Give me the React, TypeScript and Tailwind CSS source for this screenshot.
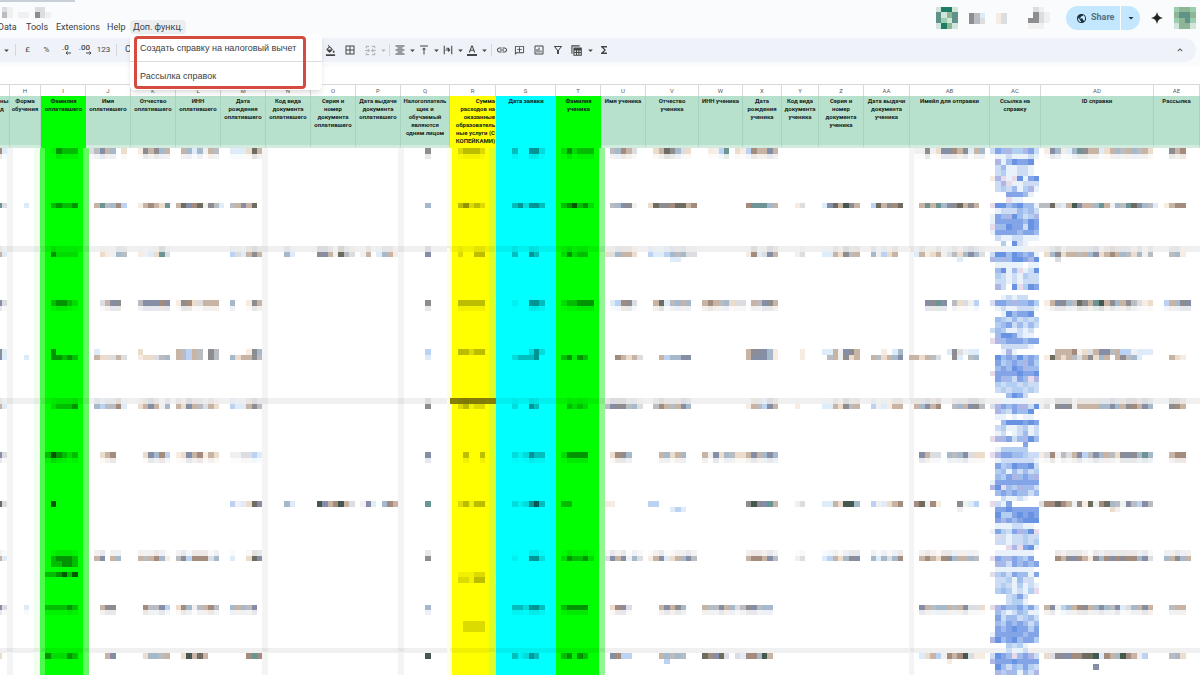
import { Fragment, ReactNode } from "react";
import clsx from "clsx";
import {
  MdArrowDropDown,
  MdBorderAll,
  MdFormatAlignCenter,
  MdFormatColorFill,
  MdFormatColorText,
  MdFunctions,
  MdKeyboardArrowUp,
  MdLink,
  MdOutlineAddComment,
  MdOutlineFilterAlt,
  MdOutlineInsertChart,
  MdPublic,
  MdVerticalAlignTop,
} from "react-icons/md";

type Column = {
  name: string;
  width: number;
  col: string;
  title: string[];
  cell?: string;
  head?: string;
};

const COLUMNS: Column[] = [
  { name: "", width: 10, col: "w-[10px]", title: ["ны", "д"], head: "text-left" },
  { name: "H", width: 31, col: "w-[31px]", title: ["Форма", "обучения"] },
  { name: "I", width: 45, col: "w-[45px]", title: ["Фамилия", "оплатившего"], cell: "bg-[#00ff00]" },
  { name: "J", width: 45, col: "w-[45px]", title: ["Имя", "оплатившего"] },
  { name: "K", width: 45, col: "w-[45px]", title: ["Отчество", "оплатившего"] },
  { name: "L", width: 45, col: "w-[45px]", title: ["ИНН", "оплатившего"] },
  { name: "M", width: 45, col: "w-[45px]", title: ["Дата", "рождения", "оплатившего"] },
  { name: "N", width: 45, col: "w-[45px]", title: ["Код вида", "документа", "оплатившего"] },
  { name: "O", width: 45, col: "w-[45px]", title: ["Серия и", "номер", "документа", "оплатившего"] },
  { name: "P", width: 45, col: "w-[45px]", title: ["Дата выдачи", "документа", "оплатившего"] },
  { name: "Q", width: 49, col: "w-[49px]", title: ["Налогоплатель", "щик и", "обучаемый", "являются", "одним лицом"] },
  {
    name: "R",
    width: 46,
    col: "w-[46px]",
    title: ["Сумма", "расходов на", "оказанные", "образователь", "ные услуги (С", "КОПЕЙКАМИ)"],
    cell: "bg-[#ffff00]",
    head: "pr-px text-right",
  },
  { name: "S", width: 60, col: "w-[60px]", title: ["Дата заявки"], cell: "bg-[#00ffff]" },
  { name: "T", width: 45, col: "w-[45px]", title: ["Фамилия", "ученика"], cell: "bg-[#00ff00]" },
  { name: "U", width: 45, col: "w-[45px]", title: ["Имя ученика"] },
  { name: "V", width: 53, col: "w-[53px]", title: ["Отчество", "ученика"] },
  { name: "W", width: 44, col: "w-[44px]", title: ["ИНН ученика"] },
  { name: "X", width: 39, col: "w-[39px]", title: ["Дата", "рождения", "ученика"] },
  { name: "Y", width: 37, col: "w-[37px]", title: ["Код вида", "документа", "ученика"] },
  { name: "Z", width: 45, col: "w-[45px]", title: ["Серия и", "номер", "документа", "ученика"] },
  { name: "AA", width: 46, col: "w-[46px]", title: ["Дата выдачи", "документа", "ученика"] },
  { name: "AB", width: 80, col: "w-[80px]", title: ["Имейл для отправки"] },
  { name: "AC", width: 51, col: "w-[51px]", title: ["Ссылка на", "справку"] },
  { name: "AD", width: 113, col: "w-[113px]", title: ["ID справки"] },
  { name: "AE", width: 46, col: "w-[46px]", title: ["Рассылка"] },
];

const LEFTS = COLUMNS.map((_, i) =>
  COLUMNS.slice(0, i).reduce((sum, c) => sum + c.width, 0)
);

// mosaic block size and the place of block 0,0 relative to the sheet body
const BLOCK = 5.43;
const ORIGIN_X = 1.8;
const ORIGIN_Y = 0.4;

const PALETTE: Record<string, string> = {
  a: "#f0f0f0",
  b: "#dcdde0",
  c: "#b9bdc1",
  d: "#8d8d91",
  e: "#6e6c60",
  f: "#45584f",
  g: "#ecdccb",
  h: "#c7b4a5",
  i: "#a38b7e",
  j: "#deebf9",
  k: "#bcd2f3",
  l: "#a5b9cb",
  m: "#868ea6",
  n: "#6c9494",
  o: "#f7ece1",
  t: "#d2e5dc",
  v: "#1f7f66",
  w: "#5f938a",
  x: "#8fb594",
  z: "#99cfae",
  A: "#e9f1fb",
  B: "#cddcf5",
  C: "#b2cff2",
  D: "#a0bcec",
  E: "#83a5e8",
  F: "#6893e2",
  G: "#aeb6e6",
  H: "#e6daeb",
  I: "#d8def0",
  "1": "rgba(0,0,0,0.06)",
  "2": "rgba(0,0,0,0.14)",
  "3": "rgba(0,0,0,0.26)",
  "4": "rgba(0,0,0,0.42)",
  "5": "rgba(0,0,0,0.65)",
};

// [line, "block:colours ..."], optionally with the line of its pale echo
type Line = [number, string, number?];

const LINES: Line[] = [
  [0, "-1:ij 9:14333 16:bcmhl.g 25:odhdlh 33:hljlahc 42:jjjgeh 78:d 84:23332 94:3..442 103:242333 112:clihb 120:ghedlbg 130:oakn 135:gokihhmh 168:aadagmmihdjhl 192:omlojlndhhjghlchlchg 215:dhi", 1],
  [10, "-1:nb 4:j 9:34334 17:hnclik 25:ohihgn 32:hemieadcj 42:chmhe 78:l 84:34232 94:342443 103:345342 112:clmda 119:geddieehi 137:innnlh 146:ob 151:jmehfdh 160:kehdie 169:hnhnlmdehdh 191:ccebjhfmhhlnhalcnemlcj 214:ohii"],
  [19, "-1:hj 9:42222 18:goalc 25:oajgnb 42:kbjhdh 52:lj 58:dmhaecb 66:ah.jlho 78:m 84:2..33 94:3..43 103:24233 111:gblhhg 119:kjjklclbb 137:oijbmh 146:ab 151:jjhgdch 160:lakgh 168:jhoghabcglmlb 192:gldghhchlmghihlcglac 215:clo", 18],
  [20, "123:jj 176:j 194:b"],
  [28, "-1:mb 9:34432 18:bhmd 25:cmmmim 32:odigbhhh 42:l..odh 78:d 84:33333 94:1..443 103:233444 112:jkidb 120:hejclhl 129:hihclgbb 138:hcmdh 170:mdnm 175:cgbak 192:ohmdlcedhnfhdlhdcbog 214:khldm", 29],
  [37, "-1:dj 9:4 17:j 25:g 32:hckhc.dc 45:odl 78:k 84:33233 97:242 137:hdmmlo 147:o 151:jjhamdh 162:o.jl 174:jdbajj 194:hhhiagbhmmchkkajjj"],
  [38, "-1:mj 4:j 9:44343 17:hggbhb 25:oggbcl 32:hckhc.dc 42:lghhdc 78:j 94:23334 103:34143 113:ihghb 121:hkllmm 137:hmmmlo 147:o 152:chadgh 160:hcghlm 167:hhghcb 175:dj.cl 192:oehghcbhdglh.hdclj 215:hgo"],
  [47, "-1:hj 9:23334 17:lkccij 25:ghmhal 32:hgmhcbhg 42:kjjhdc 78:d 84:23122 94:2..43 104:3232 111:cmddclb 120:cihchml 137:ohckmh 146:o 151:jjhgdch 160:kajohh 168:hlmhi 175:clhmdc 191:ab.dmdahhhhllmlhdihml 215:dih", 46],
  [56, "-1:mb 8:354323 18:ghi 26:gmlik 32:ogmhiohg 42:aabbkj 78:m 85:3..3 94:212433 103:24444 112:gidl 121:hlghl 129:hamglcgghmhlml 169:mhbb.lclmbgg 191:obiacbhmkcmlhcgdmdlnl 215:hii", 57],
  [65, "-1:eb 9:5 42:kajgem 52:lj 58:fmhifhb 66:amj.lih 78:n 84:23133 94:212453 103:33 111:oo 119:kk 137:dfdmnh 146:ab 151:jjhgffl 160:kajghi 168:ieaio 176:dajk 191:biieihadoeaielcamckmc"],
  [66, "123:jkj 176:a 204:ga"],
  [75, "-1:hj 9:34443 17:hm.hl 25:hchilo 32:cdkiiibl 42:j..gem 78:d 94:1..442 103:243342 111:bmhmalb 119:ohmjghlmc 137:hiihmc 146:ab 151:jkhgldm 160:ljlbli 169:hihgidlhhlc 194:ihdmihodlimidiilmb 214:lhdlh", 74],
  [76, "9:33443"],
  [78, "8:334535 84:11122"],
  [79, "84:22133"],
  [84, "-1:mb 4:j 8:333343 18:hdd 26:iccmk 32:gilachic 42:lhlcm 78:l 94:332443 103:34444 112:gimb 121:hmhdl 129:hccmhlbcdmcll 169:mhcllhchmbbg 192:hmaklhidhlmlcmjblhmh 215:chh", 85],
  [87, "85:2222"],
  [88, "85:2222"],
  [93, "-1:g 8:422243 19:hm 26:gllch 33:gfheh 45:ini 78:f 94:31243 103:34143 112:mikk 121:hlclc 129:eimeb 135:bjiilfh 169:jghkaihifboo 192:gbdmmiieefjihlfihak 215:clg"],
  [94, "122:k 174:o"],
  [95, "201:m"],
];

// the blurred links of column AC, one entry per mosaic line
const LINKS = `BEDGCCGEB .AABAAABA .GADFEEF. .BDAABBA. .BCAABBA. oGHAHFAEF .BGHAABBB
.BCBDACGA ...EEEDA. ...HAA... HFFDEFDDA .ABBBDCDB AEDGFDBCG AEEEEEDFE HDDFEEBFE
AEEEEDEED .BAABBAAA ..C.FIA.. ...AAA... BFFDFEDEA GDGDFFEGF .AAAAA.AA .DFADHABF
.CBABACBB .BBABABBB .GB.FHCFE ......... ..ABABB.. IEEDGDDEC .ABAABBBA ..AFDEEF.
.DCBDBCBC .CDEBDBDB BDCAABAB. .DFFEBAA. HGDEEEDEE ..BBBBBA. ..AGA.... .FDEDFDED
.ECDEDGEC .DEDFEGDD HEEEEFEEF .EGDBEDHG .CBCCBCBB .BCBCCBCB ...DFEB.. ..AAAAA..
IGEDEGGBF .GCBEDDF. .AA.A.AA. ..DFFFEFE .BCAABCAB .AB.ABDAB HGGEBDGFD ......E..
.ACCCCC.. HGEEDDCBB .ABBBBBBA .ECDFEEFB .CDADBDBC .DCEGDEDG AEEEEEEEE GFHDCGDDB
.DEDEDDBD ..BAABA.. HBAE..... .EEFEEEEE .FCCEFEFE .EGEDEFFF .AAABBAA. AECBEGDFH
.IBABBCBB .BBABBCBC ...HGHEFA .AAAAAAA. HEDGEDCE. .GDBEDEDE .AAAAAAA. HCDBEDDAE
.BBCADIB. .BCBACABA .CDCABACH ...BCEB.. ...BCCA.. HGEDDECEB .DBABDCAA .EBDDBCDB
.DCEDEDBD .EDEFEECE AEEEEEDEE GFDEFDEEC ...CBCA.. ...BAAB.. BFEDHDEGB GEEEFEEEE
.FDBDCECB .GCGDADBG`.split(/\s+/);

// soft vertical lines left by the pixelation, by block column
const STRIPES: Record<string, [number, string][]> = {
  "": [[1, "#f4f4f4"]],
  H: [[6, "#f0fdf0"]],
  I: [
    [7, "#4dfb4d"],
    [15, "#62fb62"],
  ],
  M: [[48, "#f4f4f4"]],
  P: [[73, "#f4f4f4"]],
  R: [
    [82, "#ffffe0"],
    [89.8, "#d9ff26"],
  ],
  T: [[110, "#93f593"]],
  AB: [[167, "#f4f4f4"]],
};

const ROW_LINES = [18, 46, 92];

// top edges of the sheet rows, counted from the first mosaic line
const TOPS = [0, 49, 100, 150, 201, 251, 302, 352, 403, 453, 504, 554];

type Block = { x: number; y: number; fill: string; opacity?: number };

const parseRuns = (runs: string, line: number, opacity?: number): Block[] =>
  runs.split(" ").flatMap((run) => {
    const [start, colours] = run.split(":");
    return [...colours].flatMap((c, i) =>
      c === "."
        ? []
        : [
            {
              x: ORIGIN_X + (Number(start) + i) * BLOCK,
              y: ORIGIN_Y + line * BLOCK,
              fill: PALETTE[c],
              opacity,
            },
          ]
    );
  });

const BLOCKS: Block[] = [
  ...LINES.flatMap(([line, runs, echo]) => [
    ...parseRuns(runs, line),
    ...(echo === undefined ? [] : parseRuns(runs, echo, 0.2)),
  ]),
  ...LINKS.flatMap((colours, line) => parseRuns(`182:${colours}`, line)),
];

const blocksFor = (column: number, row: number) => {
  const left = LEFTS[column];
  const right = left + COLUMNS[column].width;
  return BLOCKS.filter((b) => {
    const x = Math.max(b.x + BLOCK / 2, 0);
    const y = b.y + BLOCK / 2;
    return x >= left && x < right && y >= TOPS[row] && y < TOPS[row + 1];
  });
};

const CellMosaic = ({ column, row }: { column: number; row: number }) => {
  const { name, width } = COLUMNS[column];
  const left = LEFTS[column];
  const top = TOPS[row];
  const height = TOPS[row + 1] - top;
  const olive = name === "R";

  return (
    <svg
      width={width}
      height={height}
      className="mx-auto block overflow-visible"
      shapeRendering="crispEdges"
      aria-hidden="true"
    >
      {(STRIPES[name] ?? []).map(([k, fill]) => (
        <rect key={k} x={ORIGIN_X + k * BLOCK - left} y={0} width={BLOCK} height={height} fill={fill} />
      ))}
      {ROW_LINES.filter((l) => l * BLOCK + 3 >= top && l * BLOCK + 3 < top + height).map((l) => (
        <rect
          key={l}
          x={0}
          y={ORIGIN_Y + l * BLOCK - top}
          width={width}
          height={BLOCK}
          fill={olive && l === 46 ? "#857f08" : "rgba(0,0,0,0.06)"}
        />
      ))}
      {blocksFor(column, row).map((b, i) => (
        <rect
          key={i}
          x={b.x - left}
          y={b.y - top}
          width={BLOCK}
          height={BLOCK}
          fill={b.fill}
          opacity={b.opacity}
        />
      ))}
    </svg>
  );
};

// a hidden name or avatar
const Mosaic = ({ rows }: { rows: string[] }) => (
  <svg
    width={Math.round(rows[0].length * BLOCK)}
    height={Math.round(rows.length * BLOCK)}
    shapeRendering="crispEdges"
    aria-hidden="true"
  >
    {rows.map((row, y) =>
      [...row].map((c, x) =>
        c === "." ? null : (
          <rect
            key={`${x}-${y}`}
            x={x * BLOCK}
            y={y * BLOCK}
            width={BLOCK}
            height={BLOCK}
            fill={PALETTE[c]}
          />
        )
      )
    )}
  </svg>
);

const Tool = ({
  label,
  className,
  children,
}: {
  label: string;
  className?: string;
  children: ReactNode;
}) => (
  <button
    type="button"
    aria-label={label}
    className={clsx("flex h-5 shrink-0 items-center justify-center", className ?? "w-[19px]")}
  >
    {children}
  </button>
);

const Caret = ({ className }: { className?: string }) => (
  <span className={clsx("flex shrink-0 justify-center", className ?? "w-2")}>
    <MdArrowDropDown className="size-[11px] shrink-0" />
  </span>
);

const Separator = () => (
  <span className="flex w-[6px] shrink-0 justify-center">
    <span className="h-3 w-px bg-[#d3d8de]" />
  </span>
);

const Decimals = ({ text, right }: { text: string; right?: boolean }) => (
  <span className="relative -mt-1 text-[8px] font-medium leading-[10px]">
    {text}
    <svg
      viewBox="0 0 6 4"
      className={clsx("absolute -right-[2px] top-[8px] h-1 w-[6px]", right && "-scale-x-100")}
      fill="none"
      stroke="currentColor"
    >
      <path d="M6 2H1M2.6 .4 1 2l1.6 1.6" />
    </svg>
  </span>
);

const MergeIcon = () => (
  <svg viewBox="0 0 12 12" className="size-[11px]" fill="none" stroke="currentColor" strokeWidth="1.3">
    <path d="M4.5 1.5h-3v2M7.5 1.5h3v2M4.5 10.5h-3v-2M7.5 10.5h3v-2M0 6h4.5M7.5 6H12M3 4.4 4.6 6 3 7.6M9 4.4 7.4 6 9 7.6" />
  </svg>
);

const WrapIcon = () => (
  <svg viewBox="0 0 12 12" className="size-[10px]" fill="none" stroke="currentColor" strokeWidth="1.3">
    <path d="M1.5 1v10M10.5 1v10M3 6h4.6M6.2 4.2 8 6 6.2 7.8M4 3.8h3.5" />
  </svg>
);

const TableViewIcon = () => (
  <svg viewBox="0 0 12 12" className="size-[11px]" fill="none" stroke="currentColor" strokeWidth="1.2">
    <path d="M1 9.5V1h8.5M3.2 3.2h8v8h-8zM3.2 5.4h8M3.2 8.2h8M6 5.4v5.8M8.6 5.4v5.8M3.2 4.3h8" />
  </svg>
);

const SparkIcon = () => (
  <svg viewBox="0 0 12 12" className="size-3" fill="#1f2420">
    <path d="M6 0C6.6 3.6 8.4 5.4 12 6 8.4 6.6 6.6 8.4 6 12 5.4 8.4 3.6 6.6 0 6 3.6 5.4 5.4 3.6 6 0Z" />
  </svg>
);

const Menu = () => (
  <nav className="flex h-[14px] items-center text-[9px] leading-[14px] text-[#3c4043]">
    <button type="button" className="-ml-[2px] w-[26px] text-left">Data</button>
    <button type="button" className="w-[32px] pl-[2px] text-left">Tools</button>
    <button type="button" className="w-[51px] text-left">Extensions</button>
    <button type="button" className="w-[23px] text-left">Help</button>
    <div className="relative">
      <button
        type="button"
        aria-haspopup="menu"
        aria-expanded="true"
        className="h-[14px] w-14 rounded-sm bg-[#ebedef] text-center"
      >
        Доп. функц.
      </button>
      <div
        role="menu"
        className="absolute left-0 top-[14px] z-20 w-48 rounded-sm bg-white font-['Liberation_Sans',sans-serif] shadow-md"
      >
        <button
          type="button"
          role="menuitem"
          className="block h-7 w-full whitespace-nowrap border-b border-[#dadce0] pl-[10px] text-left"
        >
          Создать справку на налоговый вычет
        </button>
        <button type="button" role="menuitem" className="block h-7 w-full pl-[10px] text-left">
          Рассылка справок
        </button>
        <div className="pointer-events-none absolute left-1 top-[2px] h-[53px] w-[172px] rounded-sm border-3 border-[#d64b40]" />
      </div>
    </div>
  </nav>
);

const Header = () => (
  <header className="flex h-[38px] justify-between">
    <div className="flex flex-col">
      <div className="h-[2px] w-[75px] bg-[#c9cfd7]" />
      <div className="flex h-[18px] items-end pb-[2px] pl-[2px]">
        <Mosaic rows={["ba....bb.", "ca.aa.dba"]} />
      </div>
      <Menu />
    </div>
    <div className="flex h-9 items-center">
      <div className="flex items-center gap-[11px] pr-4">
        <Mosaic rows={["tvvt", "wtxw", "wztw", "tvxt"]} />
        <Mosaic rows={["dcj", "dcb"]} />
        <Mosaic rows={["ob", "ob"]} />
        <div className="pl-[10px]">
          <Mosaic rows={[".ba.", ".dba", "ddba", "aaa."]} />
        </div>
      </div>
      <div className="flex h-6 overflow-hidden rounded-full bg-[#c2e7ff] text-[#1f2f3a]">
        <button type="button" className="flex w-[54px] items-center gap-1 pl-[10px] text-[9px] font-bold text-[#55707f]">
          <MdPublic className="size-[11px] text-[#1f2f3a]" />
          Share
        </button>
        <button
          type="button"
          aria-label="Share options"
          className="flex w-5 items-center justify-center border-l border-white"
        >
          <MdArrowDropDown className="size-3" />
        </button>
      </div>
      <button type="button" aria-label="Gemini" className="mx-[11px]">
        <SparkIcon />
      </button>
      <div className="pr-1">
        <Mosaic rows={["zxxz", "xwwx", "zxwz", "txxt"]} />
      </div>
    </div>
  </header>
);

const Toolbar = () => (
  <div className="mr-1 flex h-6 items-center rounded-r-full bg-[#eff3f9] text-[8px] text-[#444746]">
    <Caret className="w-3" />
    <Separator />
    <Tool label="Currency">£</Tool>
    <Tool label="Percent">%</Tool>
    <Tool label="Decrease decimals">
      <Decimals text=".0" />
    </Tool>
    <Tool label="Increase decimals">
      <Decimals text=".00" right />
    </Tool>
    <Tool label="More formats">123</Tool>
    <Separator />
    <Tool label="Font" className="w-[201px]">
      <span className="w-full pl-[6px] text-left text-[9px]">C</span>
    </Tool>
    <Tool label="Fill colour" className="w-5">
      <MdFormatColorFill className="size-[11px]" />
    </Tool>
    <Tool label="Borders" className="w-5">
      <MdBorderAll className="size-3" />
    </Tool>
    <span className="flex items-center text-[#b4b8bc]">
      <Tool label="Merge cells" className="w-5">
        <MergeIcon />
      </Tool>
      <Caret className="w-[6px]" />
    </span>
    <Separator />
    <Tool label="Horizontal align" className="w-4">
      <MdFormatAlignCenter className="size-3" />
    </Tool>
    <Caret />
    <Tool label="Vertical align" className="w-4">
      <MdVerticalAlignTop className="size-3" />
    </Tool>
    <Caret />
    <Tool label="Wrapping" className="w-4">
      <WrapIcon />
    </Tool>
    <Caret />
    <Tool label="Text colour" className="w-4">
      <MdFormatColorText className="size-3" />
    </Tool>
    <Caret />
    <Separator />
    <Tool label="Insert link" className="w-4">
      <MdLink className="size-3" />
    </Tool>
    <Tool label="Insert comment">
      <MdOutlineAddComment className="size-[11px] -scale-x-100" />
    </Tool>
    <Tool label="Insert chart">
      <MdOutlineInsertChart className="size-3" />
    </Tool>
    <Tool label="Filter">
      <MdOutlineFilterAlt className="size-3" />
    </Tool>
    <Tool label="Filter views">
      <TableViewIcon />
    </Tool>
    <Caret />
    <Tool label="Functions">
      <MdFunctions className="size-3" />
    </Tool>
    <Tool label="Hide the menus" className="ml-auto mr-2 w-4">
      <MdKeyboardArrowUp className="size-[10px]" />
    </Tool>
  </div>
);

const Sheet = () => (
  <table className="w-full table-fixed border-separate border-spacing-0">
    <colgroup>
      {COLUMNS.map((c) => (
        <col key={c.name} className={c.col} />
      ))}
    </colgroup>
    <thead>
      <tr>
        {COLUMNS.map((c) => (
          <th
            key={c.name}
            scope="col"
            className="h-3 border-r border-t border-[#d9d9d9] p-0 text-[6px] font-normal leading-[8px] text-[#575b5f]"
          >
            {c.name}
          </th>
        ))}
      </tr>
      <tr>
        {COLUMNS.map((c) => (
          <th
            key={c.name}
            scope="col"
            className={clsx(
              "h-[52px] whitespace-nowrap border-b-3 pt-px align-top text-[6px] font-bold leading-[8px] text-[#16221c]",
              c.cell ?? "border-r border-r-[#a9d3c0] bg-[#b7e1cd]",
              c.cell ? "border-b-transparent" : "border-b-[#d2ebdf]",
              c.head
            )}
          >
            {c.title.map((line, i) => (
              <Fragment key={line}>
                {i > 0 && <br />}
                {line}
              </Fragment>
            ))}
          </th>
        ))}
      </tr>
    </thead>
    <tbody>
      {TOPS.slice(0, -1).map((top, row) => (
        <tr key={top}>
          {COLUMNS.map((c, column) => (
            <td key={c.name} className={clsx("p-0", c.cell)}>
              <CellMosaic column={column} row={row} />
            </td>
          ))}
        </tr>
      ))}
    </tbody>
  </table>
);

const App = () => {
  return (
    <div className="flex h-screen flex-col overflow-hidden bg-white font-[Roboto,sans-serif]">
      <div className="shrink-0 bg-[#f9fbfd] pb-[5px]">
        <Header />
        <Toolbar />
      </div>
      <div className="h-[17px] shrink-0 bg-white" />
      <Sheet />
    </div>
  );
};

export default App;
